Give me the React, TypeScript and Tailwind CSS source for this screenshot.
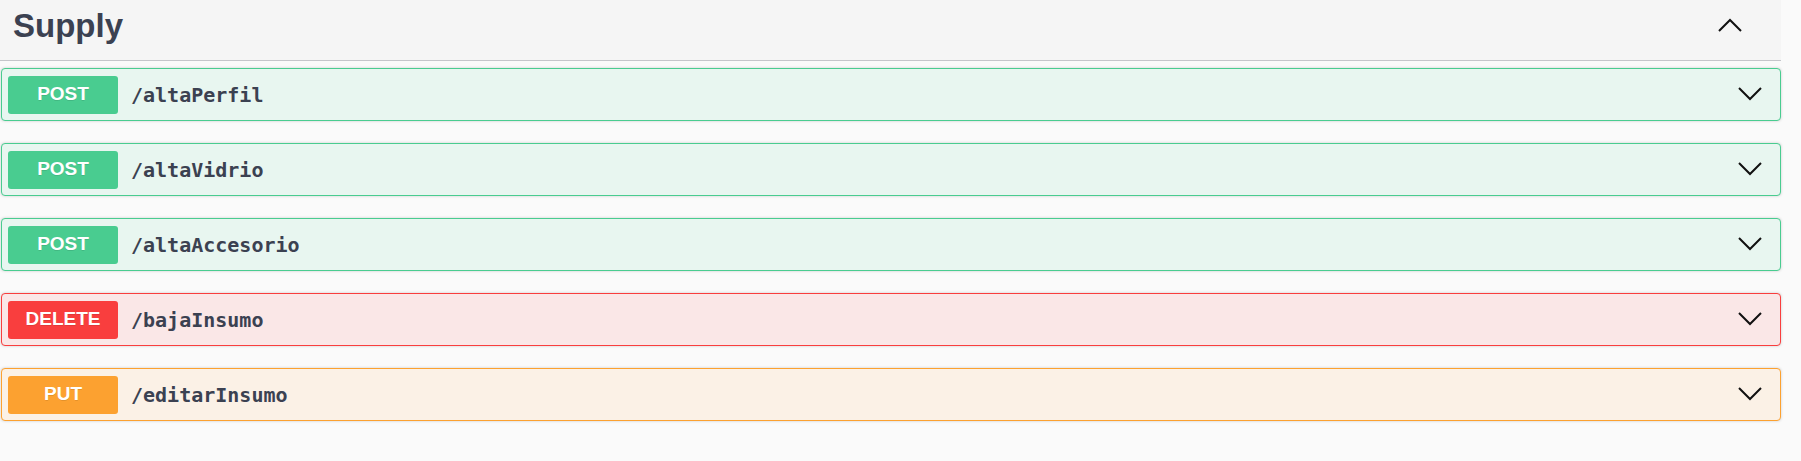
import React from "react";

type Op = {
  method: "POST" | "DELETE" | "PUT";
  path: string;
};

const ops: Op[] = [
  { method: "POST", path: "/altaPerfil" },
  { method: "POST", path: "/altaVidrio" },
  { method: "POST", path: "/altaAccesorio" },
  { method: "DELETE", path: "/bajaInsumo" },
  { method: "PUT", path: "/editarInsumo" },
];

const styles = {
  POST: {
    box: "border-[#49cc90] bg-[#e8f6f0]",
    badge: "bg-[#49cc90]",
  },
  DELETE: {
    box: "border-[#f93e3e] bg-[#fae7e7]",
    badge: "bg-[#f93e3e]",
  },
  PUT: {
    box: "border-[#fca130] bg-[#fbf1e6]",
    badge: "bg-[#fca130]",
  },
};

function Chevron({ up }: { up?: boolean }) {
  return (
    <svg width="24" height="14" viewBox="0 0 24 14" fill="none">
      <polyline
        points={up ? "1,13 12,2 23,13" : "1,1 12,12 23,1"}
        stroke="#111"
        strokeWidth="2"
      />
    </svg>
  );
}

export default function App() {
  return (
    <div className="min-h-[461px] w-full bg-[#fafafa] pr-[20px] font-['Liberation_Sans',Arial,sans-serif]">
      {/* tag header */}
      <div className="flex h-[61px] items-start justify-between border-b border-[#c4c6ca] bg-[#f5f5f5]">
        <h4 className="pl-[13px] pt-[10px] text-[33px] font-bold leading-[32px] text-[#3b4151]">
          Supply
        </h4>
        <div className="mr-[39px] mt-[18px]">
          <Chevron up />
        </div>
      </div>

      {/* operations */}
      <div className="flex flex-col gap-[22px] pl-[1px] pt-[7px]">
        {ops.map((op) => (
          <div
            key={op.path}
            className={`flex h-[53px] items-center justify-between rounded-[4px] border shadow-[0_0_3px_rgba(0,0,0,0.19)] ${styles[op.method].box}`}
          >
            <div className="flex items-center pl-[6px]">
              <span
                className={`flex h-[38px] w-[110px] items-center justify-center rounded-[3px] text-[19px] font-bold text-white [text-shadow:0_1px_0_rgba(0,0,0,0.1)] ${styles[op.method].badge}`}
              >
                {op.method}
              </span>
              <span className="pl-[13px] font-['DejaVu_Sans_Mono',monospace] text-[20px] font-bold leading-[22px] text-[#3b4151]">
                {op.path}
              </span>
            </div>
            <div className="mr-[18px] mt-[-1px]">
              <Chevron />
            </div>
          </div>
        ))}
      </div>
    </div>
  );
}
